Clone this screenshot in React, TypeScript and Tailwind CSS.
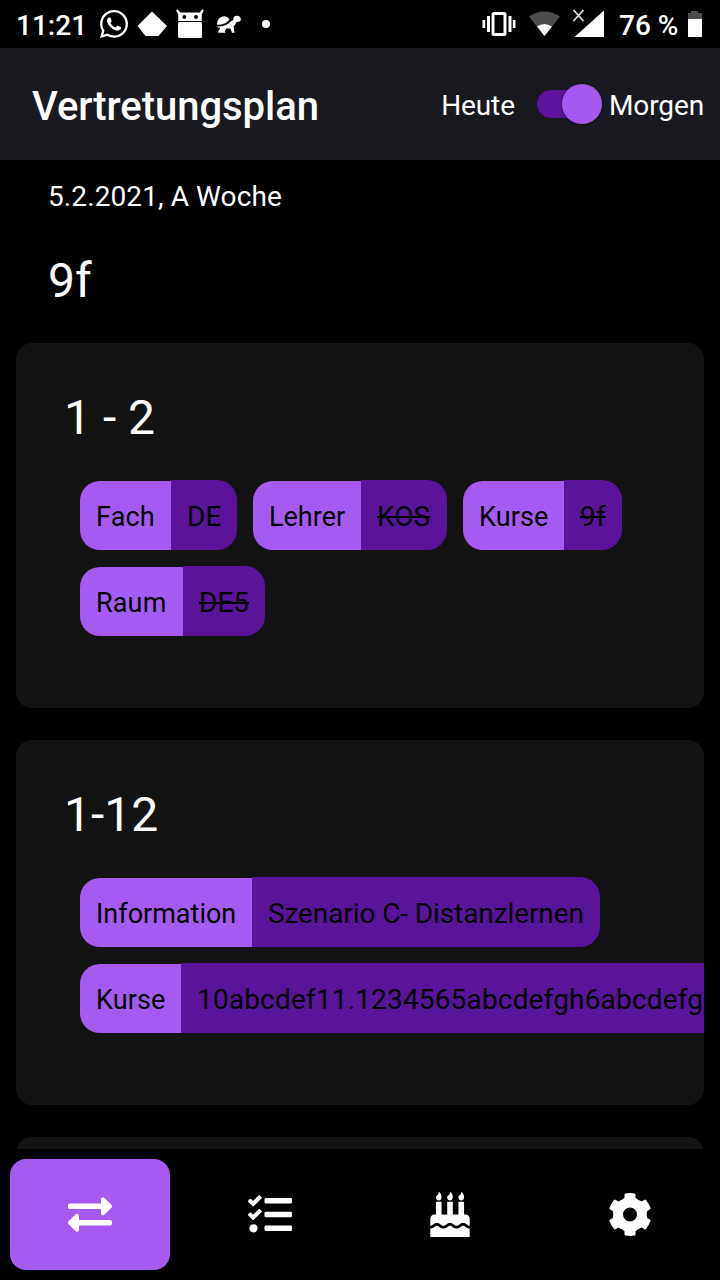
import React from "react";
import { FaBirthdayCake, FaExchangeAlt, FaTasks, FaWhatsapp } from "react-icons/fa";

type Entry = { label: string; labelClass: string; value: string; valueClass: string; cancelled?: boolean };

function StatusBar() {
  return (
    <div className="flex h-12 shrink-0 items-center justify-between bg-black text-white">
      <div className="flex items-center pl-4">
        <span className="w-[83px] pt-[3px] text-[28px] leading-none font-medium whitespace-nowrap">11:21</span>
        <FaWhatsapp className="-ml-px size-8 shrink-0" />
        <svg className="h-12 w-[145px]" viewBox="130 0 145 48" fill="currentColor">
          <path d="M152 11.5 167 26 158.5 36H145.5L137.5 26Z" />
          <path d="m176 10 1.8-.5 2.600 3h19.200l2.600-3 1.800.5-2.200 4.600V21h-23.600v-6.400Z" />
          <rect x="178" y="22" width="24" height="16" rx="1.5" />
          <circle cx="184.300" cy="17" r="2" fill="#000" />
          <circle cx="196" cy="17" r="2" fill="#000" />
          <path d="M217 24.800c-.3-5 3-8.600 7.400-8.600 2.300 0 4.200 1.300 5 3.500-2.600 3.600-6.800 5-12.400 5.100Z" />
          <path d="M216.300 26.600c6.500.1 11.700-1.600 15-5.600l2-1c-.5-2.400 1-4.300 3.600-4.300 2.400 0 4 1.700 3.900 3.700-.1 1.600-1.200 2.400-2.800 2.400-1 0-1.600.4-2 1.300-.6 1.500-1.500 2.600-2.500 3.400l1 6.300H232l-1.500-4.300h-4.200l-1.600 3.300 1 1h-5l-3-.2 2.500-4.500c-1.500-.2-2.900-.7-3.900-1.500Z" />
          <circle cx="266" cy="24" r="4" />
        </svg>
      </div>
      <div className="flex items-center pr-[18px]">
        <svg className="h-12 w-[136px]" viewBox="480 0 136 48" fill="currentColor">
          <rect x="493" y="13.500" width="12" height="21" rx="1" fill="none" stroke="currentColor" strokeWidth="3" />
          <path d="M487 16h3v16h-3zM508.500 16h3v16h-3zM482.500 20h2.700v8h-2.700zM512.800 20h2.700v8h-2.700z" />
          <path d="M529 16.500Q544.500 6.500 560 16.500L544.500 36Z" fill="#4d4d4d" />
          <path d="M537 26.600Q544.500 21.500 552 26.600L544.500 36Z" />
          <path d="M574.500 37 604 10.500V37Z" />
          <path d="m573.500 10 10 11m0-11-10 11" fill="none" stroke="#ddd" strokeWidth="1.800" />
        </svg>
        <span className="w-[72px] pt-[3px] pl-[3px] text-[28px] leading-none font-medium whitespace-nowrap">76 %</span>
        <svg className="h-12 w-[14px]" viewBox="0 0 14 48">
          <path d="M3 11h7v2h4v6H0v-6h3Z" fill="#4d4d4d" />
          <path d="M0 19h14v18H0Z" fill="#fff" />
        </svg>
      </div>
    </div>
  );
}

function Header() {
  return (
    <header className="flex h-28 shrink-0 items-center justify-between bg-[#191920] pr-4 pl-8">
      <h1 className="pt-[6px] text-[40px] leading-none font-medium tracking-[-0.05px] whitespace-nowrap">Vertretungsplan</h1>
      <div className="flex items-center text-[28px] tracking-[-0.1px] whitespace-nowrap">
        <span className="pt-1">Heute</span>
        <button className="mr-[7px] ml-[22px] flex h-7 w-[65px] items-center justify-end rounded-full bg-gradient-to-r from-[#59149a] from-85% to-transparent to-85%" aria-label="Tag">
          <span className="size-10 shrink-0 rounded-full bg-[#a259ec] shadow-[0_1px_3px_#0006]" />
        </button>
        <span className="pt-1">Morgen</span>
      </div>
    </header>
  );
}

function Chip({ label, labelClass, value, valueClass, cancelled }: Entry) {
  return (
    <div className="flex h-[70px] shrink-0 items-end text-[28px] whitespace-nowrap text-black">
      <span className={`flex h-[69px] shrink-0 items-center rounded-l-[20px] bg-[#a55bf0] pt-[3px] pl-4 text-[27px] ${labelClass}`}>{label}</span>
      <span className={`flex h-[70px] shrink-0 items-center rounded-r-[20px] bg-[#591499] pt-1 pl-4 ${valueClass}`}>
        <span className={cancelled ? "line-through decoration-2" : ""}>{value}</span>
      </span>
    </div>
  );
}

function Card({ title, entries }: { title: string; entries: Entry[] }) {
  return (
    <section className="h-[365px] shrink-0 overflow-hidden rounded-2xl bg-[#131313] pt-[47px] pl-12">
      <h2 className="text-[48px] leading-[56px]">{title}</h2>
      <div className="mt-[34px] ml-4 flex flex-wrap gap-4">
        {entries.map((e) => (
          <Chip key={e.label} {...e} />
        ))}
      </div>
    </section>
  );
}

const plans: { title: string; entries: Entry[] }[] = [
  {
    title: "1 - 2",
    entries: [
      { label: "Fach", labelClass: "w-[91px] tracking-[0.15px]", value: "DE", valueClass: "w-[66px]" },
      { label: "Lehrer", labelClass: "w-[108px]", value: "KOS", valueClass: "w-[86px]", cancelled: true },
      { label: "Kurse", labelClass: "w-[101px] tracking-[0.07px]", value: "9f", valueClass: "w-[58px] tracking-[0.2px]", cancelled: true },
      { label: "Raum", labelClass: "w-[103px] tracking-[0.15px]", value: "DE5", valueClass: "w-[82px]", cancelled: true },
    ],
  },
  {
    title: "1-12",
    entries: [
      { label: "Information", labelClass: "w-[172px]", value: "Szenario C- Distanzlernen", valueClass: "w-[348px] tracking-[-0.1px]" },
      { label: "Kurse", labelClass: "w-[101px] tracking-[0.07px]", value: "10abcdef11.1234565abcdefgh6abcdefg", valueClass: "w-[560px] tracking-[0.17px]" },
    ],
  },
  { title: "", entries: [] },
];

function Gear({ className }: { className?: string }) {
  return (
    <svg className={className} viewBox="-22 -22 44 44" fill="currentColor">
      <path fillRule="evenodd" d="M0-16.800A16.800 16.800 0 0 1 0 16.800 16.800 16.800 0 0 1 0-16.800ZM0-7A7 7 0 0 0 0 7 7 7 0 0 0 0-7Z" />
      {[0, 60, 120, 180, 240, 300].map((angle) => (
        <path key={angle} transform={`rotate(${angle})`} d="M-5.500-20Q-5.500-20.900-4.600-21.100Q0-21.800 4.600-21.100Q5.500-20.900 5.500-20V-16.700L8-14.800H-8L-5.500-16.700Z" />
      ))}
    </svg>
  );
}

const tabs = [FaExchangeAlt, FaTasks, FaBirthdayCake, Gear];

export default function App() {
  return (
    <div className="flex h-[1280px] w-[720px] flex-col overflow-hidden bg-black font-['Roboto',sans-serif] text-white">
      <StatusBar />
      <Header />
      <main className="min-h-0 flex-1 overflow-hidden px-4">
        <p className="mt-4 ml-8 text-[28px] leading-[42px] tracking-[0.1px]">5.2.2021, A Woche</p>
        <p className="mt-[35px] ml-8 text-[48px] leading-[56px]">9f</p>
        <div className="mt-[34px] flex flex-col gap-8">
          {plans.map((p, i) => (
            <Card key={i} {...p} />
          ))}
        </div>
      </main>
      <nav className="grid h-[131px] shrink-0 grid-cols-4 bg-black">
        {tabs.map((Icon, i) => (
          <button key={i} className={`m-2.5 flex items-center justify-center rounded-2xl ${i === 0 ? "bg-[#a55bf0]" : ""}`}>
            <Icon className="h-[45px] w-11" />
          </button>
        ))}
      </nav>
    </div>
  );
}
